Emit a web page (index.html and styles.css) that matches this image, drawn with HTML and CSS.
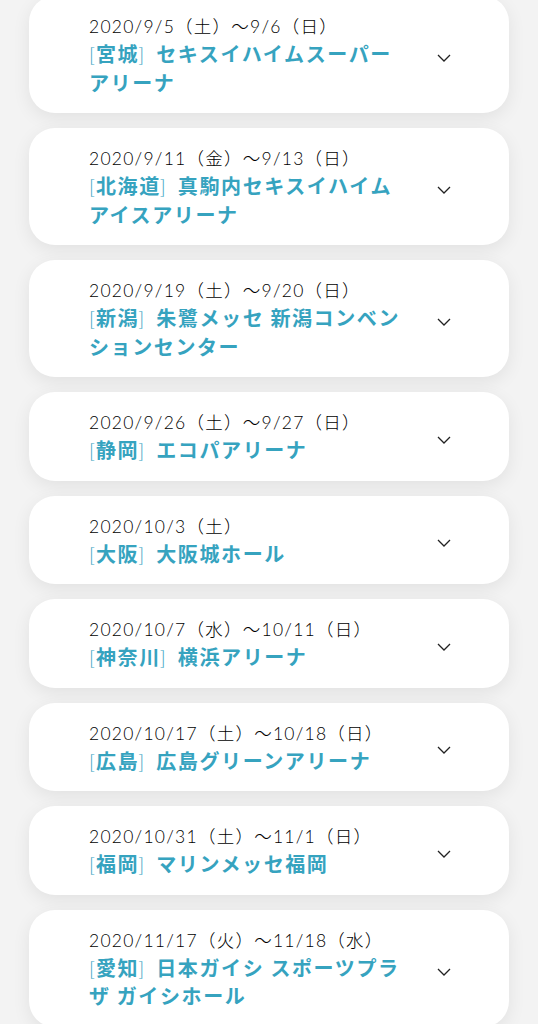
FILE: index.html
```html
<!DOCTYPE html>
<html lang="ja">
<head>
<meta charset="utf-8">
<link rel="stylesheet" href="styles.css">
</head>
<body>
<ul class="list">
  <li class="card">
    <div class="info">
      <p class="date">2020/9/5（土）～9/6（日）</p>
      <p class="venue"><span class="br">[</span>宮城<span class="br close">]</span> セキスイハイムスーパーアリーナ</p>
    </div>
    <svg class="chev" viewBox="0 0 14 8"><path d="M1 1 L7 7 L13 1"/></svg>
  </li>
  <li class="card">
    <div class="info">
      <p class="date">2020/9/11（金）～9/13（日）</p>
      <p class="venue"><span class="br">[</span>北海道<span class="br close">]</span> 真駒内セキスイハイムアイスアリーナ</p>
    </div>
    <svg class="chev" viewBox="0 0 14 8"><path d="M1 1 L7 7 L13 1"/></svg>
  </li>
  <li class="card">
    <div class="info">
      <p class="date">2020/9/19（土）～9/20（日）</p>
      <p class="venue"><span class="br">[</span>新潟<span class="br close">]</span> 朱鷺メッセ 新潟コンベンションセンター</p>
    </div>
    <svg class="chev" viewBox="0 0 14 8"><path d="M1 1 L7 7 L13 1"/></svg>
  </li>
  <li class="card">
    <div class="info">
      <p class="date">2020/9/26（土）～9/27（日）</p>
      <p class="venue"><span class="br">[</span>静岡<span class="br close">]</span> エコパアリーナ</p>
    </div>
    <svg class="chev" viewBox="0 0 14 8"><path d="M1 1 L7 7 L13 1"/></svg>
  </li>
  <li class="card">
    <div class="info">
      <p class="date">2020/10/3（土）</p>
      <p class="venue"><span class="br">[</span>大阪<span class="br close">]</span> 大阪城ホール</p>
    </div>
    <svg class="chev" viewBox="0 0 14 8"><path d="M1 1 L7 7 L13 1"/></svg>
  </li>
  <li class="card">
    <div class="info">
      <p class="date">2020/10/7（水）～10/11（日）</p>
      <p class="venue"><span class="br">[</span>神奈川<span class="br close">]</span> 横浜アリーナ</p>
    </div>
    <svg class="chev" viewBox="0 0 14 8"><path d="M1 1 L7 7 L13 1"/></svg>
  </li>
  <li class="card">
    <div class="info">
      <p class="date">2020/10/17（土）～10/18（日）</p>
      <p class="venue"><span class="br">[</span>広島<span class="br close">]</span> 広島グリーンアリーナ</p>
    </div>
    <svg class="chev" viewBox="0 0 14 8"><path d="M1 1 L7 7 L13 1"/></svg>
  </li>
  <li class="card">
    <div class="info">
      <p class="date">2020/10/31（土）～11/1（日）</p>
      <p class="venue"><span class="br">[</span>福岡<span class="br close">]</span> マリンメッセ福岡</p>
    </div>
    <svg class="chev" viewBox="0 0 14 8"><path d="M1 1 L7 7 L13 1"/></svg>
  </li>
  <li class="card">
    <div class="info">
      <p class="date">2020/11/17（火）～11/18（水）</p>
      <p class="venue"><span class="br">[</span>愛知<span class="br close">]</span> 日本ガイシ スポーツプラザ ガイシホール</p>
    </div>
    <svg class="chev" viewBox="0 0 14 8"><path d="M1 1 L7 7 L13 1"/></svg>
  </li>
</ul>
</body>
</html>
```

FILE: styles.css
```css
html, body {
  margin: 0;
  padding: 0;
  background: #f3f3f3;
}
.list {
  list-style: none;
  margin: -4px 0 0 0;
  padding: 0 29px;
  display: flex;
  flex-direction: column;
  gap: 15px;
}
.card {
  background: #fff;
  border-radius: 26px;
  box-shadow: 0 5px 18px rgba(0, 0, 0, 0.075);
  padding: 17px 0 16px 60px;
  display: flex;
  align-items: center;
}
.info {
  width: 320px;
}
.date {
  margin: 0;
  font-family: Lato, "Noto Sans CJK JP", sans-serif;
  font-weight: 300;
  font-size: 17.5px;
  line-height: 27px;
  color: #000;
  letter-spacing: 1.25px;
}
.venue {
  margin: 0;
  font-family: "Noto Sans CJK JP", sans-serif;
  font-weight: 700;
  font-size: 20px;
  line-height: 28.5px;
  letter-spacing: 1.6px;
  color: #36a3bf;
}
.br {
  font-family: Lato, sans-serif;
  font-weight: 300;
  letter-spacing: 0;
  margin-right: 1px;
}
.br.close {
  margin: 0 6px 0 -1px;
}
.chev {
  width: 14px;
  height: 8px;
  margin: 6px 0 0 28px;
  fill: none;
  stroke: #222;
  stroke-width: 1.3;
}
```
